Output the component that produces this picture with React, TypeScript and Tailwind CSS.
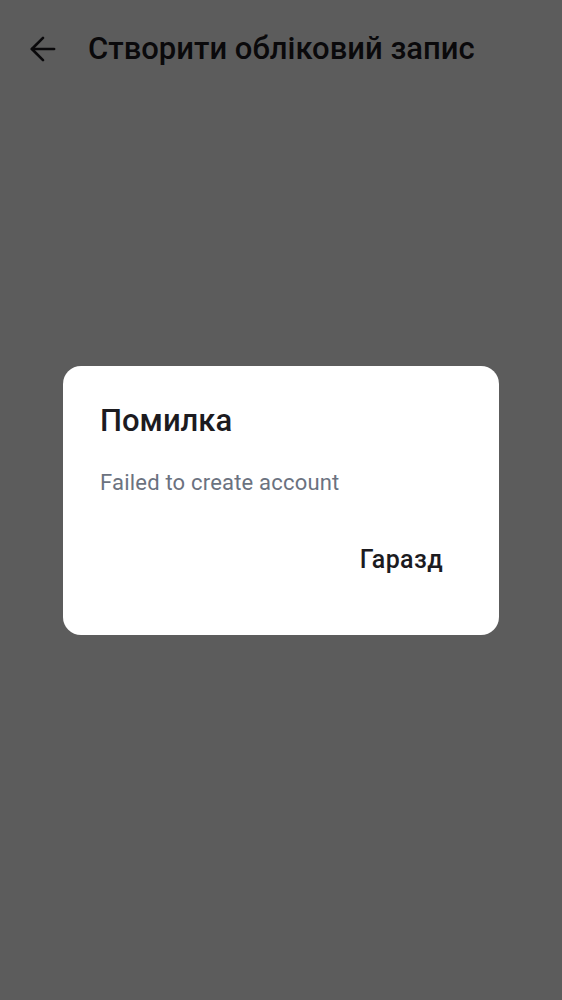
import { ArrowLeft } from "lucide-react";

// ── Error dialog ─────────────────────────────────────────────────────────────────

function ErrorDialog() {
  return (
    <div className="fixed inset-0 z-50 flex items-center justify-center">
      {/* Scrim */}
      <div className="absolute inset-0 bg-black/[0.64]" />

      {/* Panel */}
      <div className="relative w-[436px] h-[269px] rounded-[18px] bg-white pl-[37px] pr-[56px] pt-[36px]">
        <h2 className="text-[31px] leading-[38px] font-medium text-[#1c1b1f]">Помилка</h2>
        <p className="mt-[28px] text-[22px] leading-[30px] text-[#6b7280] tracking-[0.2px]">
          Failed to create account
        </p>
        <div className="mt-[46px] flex justify-end">
          <button className="text-[25px] leading-[32px] font-medium text-[#1c1b1f] tracking-[0.4px]">
            Гаразд
          </button>
        </div>
      </div>
    </div>
  );
}

export default function App() {
  return (
    <div
      className="relative w-full h-screen bg-white overflow-hidden"
      style={{ fontFamily: "Roboto, 'Noto Sans', sans-serif" }}
    >
      {/* Top bar */}
      <header className="flex items-center h-[98px] pl-[24px]">
        <ArrowLeft className="h-[38px] w-[38px] text-[#1c1b1f]" strokeWidth={1.7} />
        <h1 className="ml-[26px] text-[31px] leading-[36px] font-medium text-[#1c1b1f]">
          Створити обліковий запис
        </h1>
      </header>

      <ErrorDialog />
    </div>
  );
}
